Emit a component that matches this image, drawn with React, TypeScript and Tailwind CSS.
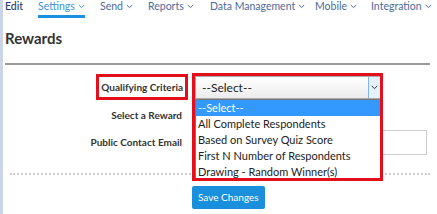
import React from 'react';

const navItems = [
  { label: 'Edit', w: 'w-[33px]', caret: false, dark: true },
  { label: 'Settings', w: 'w-[62px]', active: true, caret: true },
  { label: 'Send', w: 'w-[48px]', caret: true },
  { label: 'Reports', w: 'w-[62px]', caret: true },
  { label: 'Data Management', w: 'w-[105px]', caret: true },
  { label: 'Mobile', w: 'w-[56px]', caret: true },
  { label: 'Integration', w: 'w-[70px]', caret: true },
];

const options = [
  '--Select--',
  'All Complete Respondents',
  'Based on Survey Quiz Score',
  'First N Number of Respondents',
  'Drawing - Random Winner(s)',
];

function Caret({ className = '' }: { className?: string }) {
  return (
    <svg className={className} width="7" height="5" viewBox="0 0 7 5" fill="none">
      <path d="M0.8 1l2.7 2.6L6.2 1" stroke="currentColor" strokeWidth="1" />
    </svg>
  );
}

export default function App() {
  return (
    <div
      className="relative w-[437px] h-[214px] overflow-hidden bg-white border-l-[3px] border-[#cbd5e6]"
      style={{ fontFamily: 'Lato, "Open Sans", sans-serif' }}
    >
      {/* top nav */}
      <div className="flex items-start h-[19px] -mt-[4px] pl-[2px] text-[10.5px] leading-[18px] whitespace-nowrap">
        {navItems.map((item) => (
          <div key={item.label} className={`${item.w} shrink-0`}>
            <div
              className={`inline-flex items-center gap-[3px] h-[22px] border-b-[3px] ${
                item.active ? 'border-[#1d8fe0] text-[#3a92d8]' : 'border-transparent'
              } ${item.dark ? 'text-[#1e3d6e] font-medium' : ''} ${
                !item.active && !item.dark ? 'text-[#4b6b9c]' : ''
              }`}
            >
              <span>{item.label}</span>
              {item.caret && <Caret className="mt-[1px]" />}
            </div>
          </div>
        ))}
      </div>

      <div className="pl-[2px] pr-[7px]">
        <h1 className="mt-[13px] text-[15px] leading-[20px] font-bold text-[#333]">Rewards</h1>
        <div className="mt-[15px] h-[2px] bg-[#9a9a9a]" />

        {/* form */}
        <div className="mt-[8px] grid grid-cols-[177px_1fr] gap-x-[13px] text-[10px] text-[#333]">
          {/* qualifying criteria */}
          <div className="flex justify-end items-center h-[28px]">
            <span className="font-bold border-[3px] border-[#e3101c] px-[2px] py-[3px] -mr-[6px] leading-[14px]">
              Qualifying Criteria
            </span>
          </div>
          <div className="relative h-[28px] pt-[3px]">
            <div className="relative w-[186px] h-[23px] flex items-center border border-[#aaa] bg-gradient-to-b from-white to-[#ececec] text-[12px] text-[#222]">
              <span className="pl-[6px] flex-1">--Select--</span>
              <div className="w-[12px] h-full flex items-center justify-center border-l border-[#7eb4ea] bg-[#e5f1fb] text-[#333]">
                <Caret />
              </div>
            </div>
            <div className="absolute z-20 left-0 top-[26px] w-[186px] border border-[#777] bg-white text-[11px] leading-[16px] text-[#222]">
              {options.map((o, i) => (
                <div key={o} className={`px-[2px] ${i === 0 ? 'bg-[#3399ff] text-white' : ''}`}>
                  {o}
                </div>
              ))}
            </div>
            <div className="absolute z-30 -left-[3px] top-0 w-[191px] h-[108px] border-[3px] border-[#e3101c] pointer-events-none" />
          </div>

          {/* select a reward */}
          <div className="flex justify-end items-center h-[29px] font-bold">Select a Reward</div>
          <div className="h-[29px] flex items-center">
            <div className="w-[186px] h-[23px] border border-[#aaa] bg-white" />
          </div>

          {/* public contact email */}
          <div className="flex justify-end items-center h-[25px] font-bold">Public Contact Email</div>
          <div className="h-[25px] flex items-center">
            <div className="w-[232px] h-[25px] border border-[#ccc] bg-white" />
          </div>
        </div>

        <div className="mt-[18px] ml-[5px] border-t-2 border-dotted border-[#d0d0d0]" />

        <div className="mt-[8px] pl-[187px]">
          <button className="h-[23px] px-[6px] rounded-[2px] bg-[#1a90dc] text-white text-[10px]">
            Save Changes
          </button>
        </div>
      </div>
    </div>
  );
}
